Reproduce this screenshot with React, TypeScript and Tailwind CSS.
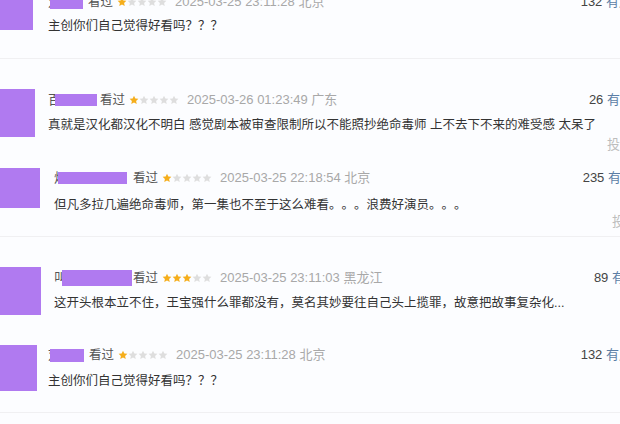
import { FC } from "react";

type CommentProps = {
	rowClass: string;
	avatarClass: string;
	contentClass: string;
	textClass: string;
	initial: string;
	initialClass: string;
	nameClass: string;
	rating: number;
	date: string;
	location: string;
	count: string;
	countClass: string;
	text: string;
	reportClass?: string;
};

const Star: FC<{ filled: boolean }> = ({ filled }) => (
	<svg width="10" height="10" viewBox="0 0 24 24" className="shrink-0">
		<path
			d="M12 1.5l3.2 6.9 7.3.8-5.5 5 1.6 7.3L12 17.8l-6.6 3.7 1.6-7.3-5.5-5 7.3-.8z"
			fill={filled ? "#f5ae1c" : "#dedede"}
		/>
	</svg>
);

const Comment: FC<CommentProps> = ({
	rowClass,
	avatarClass,
	contentClass,
	textClass,
	initial,
	initialClass,
	nameClass,
	rating,
	date,
	location,
	count,
	countClass,
	text,
	reportClass
}) => {
	return (
		<div className={`flex ${rowClass}`}>
			<div className={`shrink-0 bg-[#b07af0] ${avatarClass}`} />
			<div className={`flex-1 min-w-0 ${contentClass}`}>
				<div className="flex items-center h-4 text-[13px] leading-4 whitespace-nowrap">
					<span className={`overflow-hidden text-[#555] ${initialClass}`}>{initial}</span>
					<span className={`bg-[#b07af0] ${nameClass}`} />
					<span className="text-[12.5px] text-[#555] mr-[4px]">看过</span>
					<span className="flex mr-[8px]">
						{[0, 1, 2, 3, 4].map((i) => (
							<Star key={i} filled={i < rating} />
						))}
					</span>
					<span className="text-[#a8a8a8]">
						{date} {location}
					</span>
					<span className={`ml-auto text-[#444] ${countClass}`}>
						{count} <span className="text-[#5b7ea6]">有用</span>
					</span>
				</div>
				<p
					className={`text-[12.5px] leading-[18px] text-[#333] whitespace-nowrap [text-spacing-trim:space-all] ${textClass}`}
				>
					{text}
				</p>
				{reportClass && (
					<div className={`text-right text-[13px] leading-4 text-[#bdbdbd] ${reportClass}`}>投诉</div>
				)}
			</div>
		</div>
	);
};

export default function App() {
	return (
		<div
			className="w-[620px] h-[424px] overflow-hidden bg-[#fcfdff]"
			style={{ fontFamily: '"Liberation Sans", "Noto Sans CJK SC", sans-serif' }}
		>
			<Comment
				rowClass="-mt-[10px]"
				avatarClass="w-[33px] h-[40px]"
				contentClass="pl-[15px] pt-[4px]"
				textClass="mt-[7px]"
				initial="刘"
				initialClass="w-[2px]"
				nameClass="w-[33px] h-[13px] mr-[5px]"
				rating={1}
				date="2025-03-25 23:11:28"
				location="北京"
				count="132"
				countClass="-mr-[12px]"
				text="主创你们自己觉得好看吗？？？"
			/>
			<div className="h-px bg-[#f0f0f2] mt-[23px]" />
			<Comment
				rowClass="mt-[30px]"
				avatarClass="w-[35px] h-[48px]"
				contentClass="pl-[13px] pt-[3px]"
				textClass="mt-[8px]"
				initial="百"
				initialClass="w-[7px]"
				nameClass="w-[42px] h-[12px] mr-[3px]"
				rating={1}
				date="2025-03-26 01:23:49"
				location="广东"
				count="26"
				countClass="-mr-[13px]"
				text="真就是汉化都汉化不明白 感觉剧本被审查限制所以不能照抄绝命毒师 上不去下不来的难受感 太呆了"
				reportClass="mt-[3px] -mr-[13px]"
			/>
			<Comment
				rowClass="mt-[15px]"
				avatarClass="w-[40px] h-[40px]"
				contentClass="pl-[14px] pt-[2px]"
				textClass="mt-[10px]"
				initial="炮"
				initialClass="w-[4px]"
				nameClass="w-[69px] h-[12px] mr-[6px]"
				rating={1}
				date="2025-03-25 22:18:54"
				location="北京"
				count="235"
				countClass="-mr-[14px]"
				text="但凡多拉几遍绝命毒师，第一集也不至于这么难看。。。浪费好演员。。。"
				reportClass="-mr-[18px]"
			/>
			<div className="h-px bg-[#f0f0f2] mt-[6px]" />
			<Comment
				rowClass="mt-[30px]"
				avatarClass="w-[41px] h-[48px]"
				contentClass="pl-[13px] pt-[3px]"
				textClass="mt-[8px]"
				initial="叫"
				initialClass="w-[8px]"
				nameClass="w-[70px] h-[16px] mr-[1px]"
				rating={3}
				date="2025-03-25 23:11:03"
				location="黑龙江"
				count="89"
				countClass="-mr-[18px]"
				text="这开头根本立不住，王宝强什么罪都没有，莫名其妙要往自己头上揽罪，故意把故事复杂化..."
			/>
			<Comment
				rowClass="mt-[30px]"
				avatarClass="w-[37px] h-[46px]"
				contentClass="pl-[11px] pt-[2px]"
				textClass="mt-[9px]"
				initial="刘"
				initialClass="w-[2px]"
				nameClass="w-[34px] h-[13px] mr-[5px]"
				rating={1}
				date="2025-03-25 23:11:28"
				location="北京"
				count="132"
				countClass="-mr-[12px]"
				text="主创你们自己觉得好看吗？？？"
			/>
			<div className="h-px bg-[#f0f0f2] mt-[21px]" />
		</div>
	);
}
